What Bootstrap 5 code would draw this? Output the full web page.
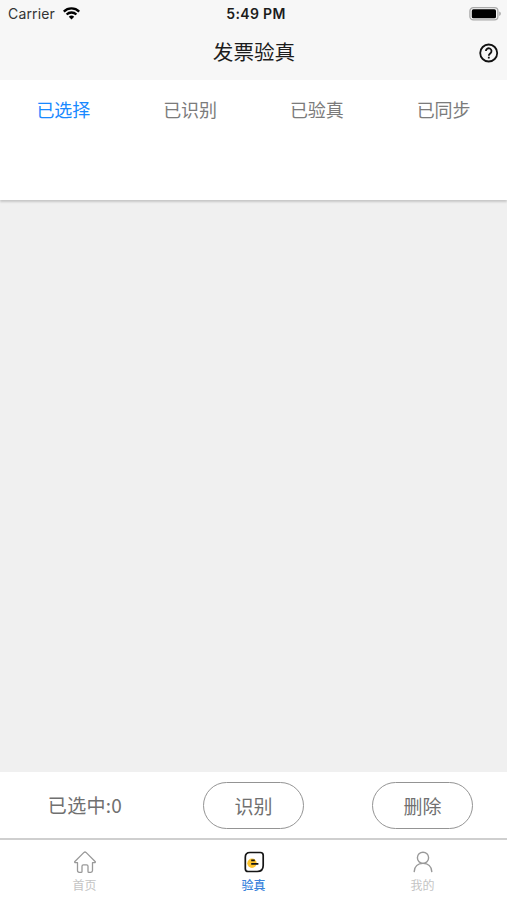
<!DOCTYPE html>
<html lang="zh-CN">
  <head>
    <meta charset="utf-8" />
    <title>发票验真</title>
    <meta name="viewport" content="width=device-width, initial-scale=1">

    <link href="https://cdn.jsdelivr.net/npm/bootstrap@5.3.0/dist/css/bootstrap.min.css" rel="stylesheet">
    <script src="https://cdn.jsdelivr.net/npm/bootstrap@5.3.0/dist/js/bootstrap.bundle.min.js"></script>

    <style>
        body {
            font-family: Inter, "Noto Sans CJK SC", sans-serif;
            background: #f0f0f0;
            color: #707070;
            line-height: 1;
        }
        svg { display: block; }

        /* status bar + title */
        .app-header { height: 80px; background: #f7f7f7; color: #1c1c1c; }
        .status-bar { height: 27px; padding: 0 6px 0 8px; font-size: 14px; }
        .carrier { color: #333; letter-spacing: .15px; }
        .clock { font-weight: 600; letter-spacing: .35px; padding-left: 3px; }
        .title-bar { height: 52px; padding-right: 8px; }
        .title-bar h1 { font-size: 20.6px; font-weight: 400; line-height: 1; padding-left: 9px; }

        /* filter tabs */
        .filter-panel { height: 120px; box-shadow: 0 2px 2px rgba(0, 0, 0, .17); }
        .filter-panel .nav-link { font-size: 18px; line-height: 20px; padding: 21px 0 0; color: #7b7b7b; }
        .filter-panel .nav-link.active { color: #1989ff; }

        /* action row */
        .action-row { height: 67px; font-size: 19px; }
        .action-row .picked { font-family: "Noto Sans CJK SC", sans-serif; padding: 0 0 2px 1px; letter-spacing: .3px; }
        .action-row .btn {
            width: 101px;
            height: 47px;
            font-size: 19px;
            line-height: 1;
            padding: 4px 0 0;
            color: #707070;
            border: 1px solid #949494;
        }

        .tab-bar { height: 62px; margin-top: -1px; border-top: 2px solid #cfcfcf; font-size: 12px; color: #c4c4c4; }
        .tab-bar a { color: inherit; padding-top: 10px; gap: 6px; }
        .tab-bar a.current { color: #3c83dc; font-weight: 500; }
    </style>
  </head>
  <body>
    <div class="d-flex flex-column vh-100 overflow-hidden">
        <header class="app-header flex-shrink-0">
            <div class="status-bar row g-0 align-items-center">
                <div class="col d-flex align-items-center gap-2">
                    <span class="carrier">Carrier</span>
                    <svg width="17" height="13" viewBox="0 0 17 13" fill="none" stroke="#000" stroke-width="2.3">
                        <path d="M.8 4.6a11 11 0 0 1 15.4 0M3.6 7.5a7 7 0 0 1 9.8 0" />
                        <path d="M8.5 12.5 5.8 9.7a3.9 3.9 0 0 1 5.4 0z" fill="#000" stroke="none" />
                    </svg>
                </div>
                <div class="col-auto clock">5:49 PM</div>
                <div class="col d-flex justify-content-end">
                    <svg width="32" height="14" viewBox="0 0 32 14">
                        <rect x=".9" y=".7" width="28" height="12.2" rx="3.4" fill="#f7f7f7" stroke="#aaa" stroke-width="1.3" />
                        <rect x="2.8" y="2.3" width="24.2" height="9" rx="1.6" />
                        <path d="M30.2 4.6q1.7.6 1.7 2.2t-1.7 2.2z" fill="#aaa" />
                    </svg>
                </div>
            </div>
            <div class="title-bar row g-0 align-items-center">
                <div class="col"></div>
                <h1 class="col-auto m-0">发票验真</h1>
                <div class="col d-flex justify-content-end">
                    <svg width="20" height="20" viewBox="0 0 20 20" fill="none" stroke="#111" stroke-width="1.8">
                        <circle cx="9.7" cy="10" r="8.5" />
                        <path d="M6.9 8.1a2.8 2.8 0 1 1 4.6 2.1c-1.1.9-1.7 1.2-1.7 2.5M9.8 13.7v1.9" />
                    </svg>
                </div>
            </div>
        </header>

        <nav class="filter-panel nav nav-justified bg-white flex-shrink-0">
            <a class="nav-link active w-25" href="#">已选择</a>
            <a class="nav-link w-25" href="#">已识别</a>
            <a class="nav-link w-25" href="#">已验真</a>
            <a class="nav-link w-25" href="#">已同步</a>
        </nav>

        <main class="flex-grow-1"></main>

        <div class="action-row row g-0 bg-white align-items-center text-center flex-shrink-0">
            <div class="col-4 picked">已选中:0</div>
            <div class="col-4"><button type="button" class="btn rounded-pill">识别</button></div>
            <div class="col-4"><button type="button" class="btn rounded-pill">删除</button></div>
        </div>

        <nav class="tab-bar row g-0 bg-white flex-shrink-0">
            <a class="col-4 d-flex flex-column align-items-center text-decoration-none" href="#">
                <svg width="24" height="24" viewBox="0 0 24 24" fill="none" stroke="#999" stroke-width="1.3" stroke-linejoin="round" stroke-linecap="round">
                    <path d="M4.5 12.7H2.1q-.8-.5-.2-1.2L11 2.4q1-.8 2 0l9.1 9.1q.6.7-.2 1.2h-2.4v7.9q0 1.7-1.7 1.7h-1.9q-.9 0-.9-.9v-5.2q0-1.4-1.4-1.4h-3.2q-1.4 0-1.4 1.4v5.2q0 .9-.9.9H6.2q-1.7 0-1.7-1.7z" />
                </svg>
                <span>首页</span>
            </a>
            <a class="col-4 d-flex flex-column align-items-center text-decoration-none current" href="#">
                <svg width="24" height="24" viewBox="0 0 24 24" fill="none" stroke="#151515" stroke-width="1.7">
                    <circle cx="10" cy="13.3" r="4.7" fill="#ffc52e" stroke="none" />
                    <path d="M8 2.5h10.4q2.8 0 2.8 2.8v10.2q0 6-6 6H6.1q-2.8 0-2.8-2.8V7.2q0-4.7 4.7-4.7z" />
                    <path d="M9.2 10.3h3.6M9.2 13.9h7.2" stroke-width="1.8" />
                </svg>
                <span>验真</span>
            </a>
            <a class="col-4 d-flex flex-column align-items-center text-decoration-none" href="#">
                <svg width="24" height="24" viewBox="0 0 24 24" fill="none" stroke="#999" stroke-width="1.4" stroke-linecap="round">
                    <circle cx="12" cy="7.8" r="5.6" />
                    <path d="M3.2 21.6c.3-5 3.8-8.2 8.8-8.2s8.5 3.2 8.8 8.2" />
                </svg>
                <span>我的</span>
            </a>
        </nav>
    </div>
  </body>
</html>
